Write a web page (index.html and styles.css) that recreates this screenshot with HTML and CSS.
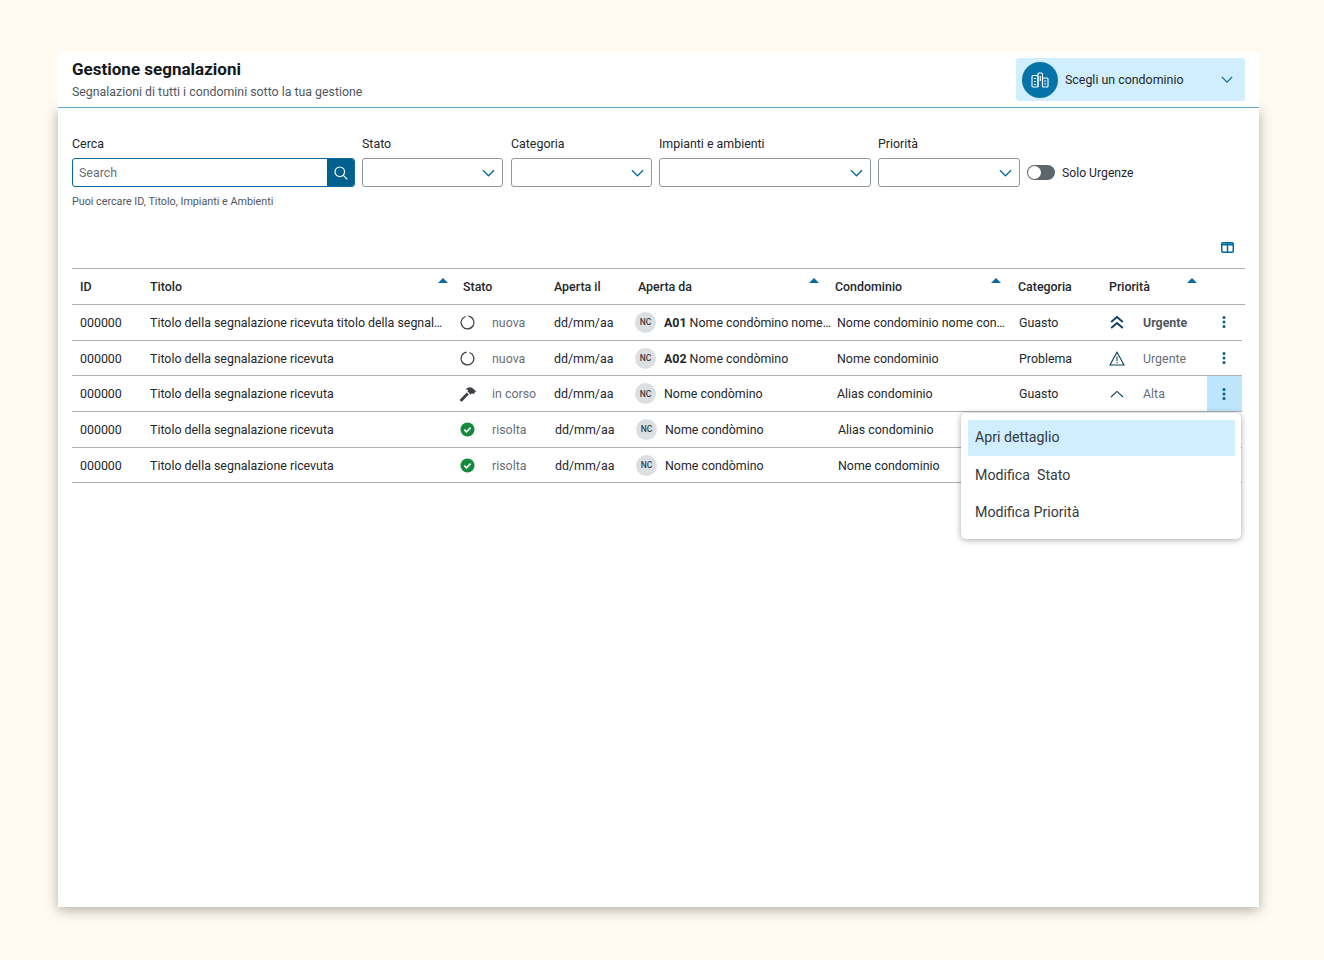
FILE: index.html
```html
<!DOCTYPE html>
<html lang="en">
<head>
  <meta charset="UTF-8">
  <title>Gestione segnalazioni</title>
  <link rel="stylesheet" href="styles.css">
</head>
<body>
  <svg class="sprite" width="0" height="0">
    <symbol id="chevron" viewBox="0 0 14 8"><path d="M1 1l6 6 6-6" fill="none" stroke="currentColor" stroke-width="1.4"/></symbol>
    <symbol id="ring" viewBox="0 0 16 16"><path d="M9 1.270A6.800 6.800 0 1 1 5.800 1.570" fill="none" stroke="currentColor" stroke-width="1.300"/></symbol>
    <symbol id="hammer" viewBox="0 0 18 16"><path d="M1.200 13.300l6.600-6.800 2 2-6.500 6.800a1 1 0 0 1-1.400 0l-.7-.6a1 1 0 0 1 0-1.400z M6.600 3.400c2-2.200 4.400-2.600 6.400-1.600l4 3.400-2.800 3-1.200-.9-1.300 1.300-3.400-3.400 1-1.200c-.8-.5-1.600-.6-2.700-.6z" fill="currentColor"/></symbol>
    <symbol id="check" viewBox="0 0 16 16"><circle cx="8" cy="8" r="7.500" fill="#168a3c"/><path d="M4.600 8.200l2.300 2.300 4.400-4.500" fill="none" stroke="#fff" stroke-width="1.700"/></symbol>
    <symbol id="double-up" viewBox="0 0 14 14"><path d="M1.200 7l5.800-5 5.800 5M1.200 13l5.800-5 5.800 5" fill="none" stroke="currentColor" stroke-width="1.800"/></symbol>
    <symbol id="warning" viewBox="0 0 16 15"><path d="M8 1.200l7 12.800H1z" fill="none" stroke="currentColor" stroke-width="1.100"/><path d="M8 5.500v4.600M8 11v1.300" stroke="currentColor" stroke-width="1.100"/></symbol>
    <symbol id="up" viewBox="0 0 14 8"><path d="M1 7l6-5.600L13 7" fill="none" stroke="currentColor" stroke-width="1.100"/></symbol>
    <symbol id="kebab" viewBox="0 0 4 12"><circle cx="2" cy="1.600" r="1.500"/><circle cx="2" cy="6" r="1.500"/><circle cx="2" cy="10.400" r="1.500"/></symbol>
  </svg>

  <div class="app">
    <header class="top">
      <div>
        <h1>Gestione segnalazioni</h1>
        <p>Segnalazioni di tutti i condomini sotto la tua gestione</p>
      </div>
      <div class="picker">
        <span class="picker-icon">
          <svg width="18" height="16" viewBox="0 0 18 16" fill="none" stroke="#fff" stroke-width="1.100">
            <rect x="1" y="3.500" width="6" height="11.500" rx="1"/>
            <path d="M7 15V2a1 1 0 0 1 1-1h2.500a1 1 0 0 1 1 1v13"/>
            <rect x="11.500" y="6" width="5.500" height="9" rx="1"/>
            <path d="M3 6.500h2M3 9.500h2M3 12.500h2M9.300 4v5M13.300 9h2M13.300 12h2"/>
          </svg>
        </span>
        <span class="picker-text">Scegli un condominio</span>
        <svg class="chev" width="12" height="7"><use href="#chevron"/></svg>
      </div>
    </header>

    <main class="panel">
      <div class="filters">
        <div class="field f-search">
          <label>Cerca</label>
          <div class="search">
            <span>Search</span>
            <button>
              <svg width="14" height="14" viewBox="0 0 14 14" fill="none" stroke="#fff" stroke-width="1.200"><circle cx="5.800" cy="5.800" r="4.800"/><path d="M9.300 9.300l4 4"/></svg>
            </button>
          </div>
          <small>Puoi cercare ID, Titolo, Impianti e Ambienti</small>
        </div>
        <div class="field f-stato">
          <label>Stato</label>
          <div class="select"><svg class="chev" width="13" height="8"><use href="#chevron"/></svg></div>
        </div>
        <div class="field f-cat">
          <label>Categoria</label>
          <div class="select"><svg class="chev" width="13" height="8"><use href="#chevron"/></svg></div>
        </div>
        <div class="field f-impianti">
          <label>Impianti e ambienti</label>
          <div class="select"><svg class="chev" width="13" height="8"><use href="#chevron"/></svg></div>
        </div>
        <div class="field f-prio">
          <label>Priorità</label>
          <div class="select"><svg class="chev" width="13" height="8"><use href="#chevron"/></svg></div>
        </div>
        <div class="urgent">
          <span class="toggle"><i></i></span>
          Solo Urgenze
        </div>
      </div>

      <div class="tools">
        <svg width="13" height="11" viewBox="0 0 13 11" fill="none" stroke="#006b9f" stroke-width="1.500"><rect x=".75" y=".75" width="11.500" height="9.500" rx="1"/><path d="M6.500 1v9"/><path d="M.75 2.500h11.500" stroke-width="2"/></svg>
      </div>

      <div class="table">
        <div class="row head">
          <div class="c-id">ID</div>
          <div class="c-title">Titolo<i class="sort"></i></div>
          <div class="c-state">Stato</div>
          <div class="c-date">Aperta il</div>
          <div class="c-by">Aperta da<i class="sort"></i></div>
          <div class="c-cond">Condominio<i class="sort"></i></div>
          <div class="c-cat">Categoria</div>
          <div class="c-prio">Priorità<i class="sort"></i></div>
          <div></div>
        </div>

        <div class="row">
          <div class="c-id">000000</div>
          <div class="c-title">Titolo della segnalazione ricevuta titolo della segnal…</div>
          <div class="c-state"><svg class="ic" width="15" height="15"><use href="#ring"/></svg><span class="muted">nuova</span></div>
          <div class="c-date">dd/mm/aa</div>
          <div class="c-by"><span class="nc">NC</span><span><b>A01</b> Nome condòmino nome…</span></div>
          <div class="c-cond">Nome condominio nome con…</div>
          <div class="c-cat">Guasto</div>
          <div class="c-prio"><svg class="pi navy" width="14" height="14"><use href="#double-up"/></svg><b class="muted-b">Urgente</b></div>
          <div class="c-act"><svg width="4" height="12"><use href="#kebab"/></svg></div>
        </div>

        <div class="row">
          <div class="c-id">000000</div>
          <div class="c-title">Titolo della segnalazione ricevuta</div>
          <div class="c-state"><svg class="ic flip" width="15" height="15"><use href="#ring"/></svg><span class="muted">nuova</span></div>
          <div class="c-date">dd/mm/aa</div>
          <div class="c-by"><span class="nc">NC</span><span><b>A02</b> Nome condòmino</span></div>
          <div class="c-cond">Nome condominio</div>
          <div class="c-cat">Problema</div>
          <div class="c-prio"><svg class="pi navy" width="16" height="15"><use href="#warning"/></svg><span class="muted">Urgente</span></div>
          <div class="c-act"><svg width="4" height="12"><use href="#kebab"/></svg></div>
        </div>

        <div class="row">
          <div class="c-id">000000</div>
          <div class="c-title">Titolo della segnalazione ricevuta</div>
          <div class="c-state"><svg class="ic" width="18" height="16"><use href="#hammer"/></svg><span class="muted">in corso</span></div>
          <div class="c-date">dd/mm/aa</div>
          <div class="c-by"><span class="nc">NC</span><span>Nome condòmino</span></div>
          <div class="c-cond">Alias condominio</div>
          <div class="c-cat">Guasto</div>
          <div class="c-prio"><svg class="pi navy" width="14" height="8"><use href="#up"/></svg><span class="muted">Alta</span></div>
          <div class="c-act active"><svg width="4" height="12"><use href="#kebab"/></svg></div>
        </div>

        <div class="row nudge">
          <div class="c-id">000000</div>
          <div class="c-title">Titolo della segnalazione ricevuta</div>
          <div class="c-state"><svg class="ic" width="15" height="15"><use href="#check"/></svg><span class="muted">risolta</span></div>
          <div class="c-date">dd/mm/aa</div>
          <div class="c-by"><span class="nc">NC</span><span>Nome condòmino</span></div>
          <div class="c-cond">Alias condominio</div>
          <div></div><div></div><div></div>
        </div>

        <div class="row nudge">
          <div class="c-id">000000</div>
          <div class="c-title">Titolo della segnalazione ricevuta</div>
          <div class="c-state"><svg class="ic" width="15" height="15"><use href="#check"/></svg><span class="muted">risolta</span></div>
          <div class="c-date">dd/mm/aa</div>
          <div class="c-by"><span class="nc">NC</span><span>Nome condòmino</span></div>
          <div class="c-cond">Nome condominio</div>
          <div></div><div></div><div></div>
        </div>

        <ul class="menu">
          <li class="on">Apri dettaglio</li>
          <li>Modifica&nbsp; Stato</li>
          <li>Modifica Priorità</li>
        </ul>
      </div>
    </main>
  </div>
</body>
</html>
```

FILE: styles.css
```css
* { box-sizing: border-box; }

body {
  margin: 0;
  height: 960px;
  padding: 52px 65px 0 58px;
  background: #fffbf3;
  font-family: Roboto, "Liberation Sans", sans-serif;
  font-size: 12.400px;
  color: #23282d;
  overflow: hidden;
}

.sprite { position: absolute; }

.app { width: 1201px; }

/* header */
.top {
  position: relative;
  z-index: 1;
  display: flex;
  justify-content: space-between;
  height: 56px;
  padding: 6px 14px 0;
  background: #fff;
  border-bottom: 1px solid #66a6c8;
}

.top h1 {
  margin: 1px 0 5px;
  font-size: 17px;
  line-height: 20px;
  font-weight: 700;
  color: #14181c;
}

.top p {
  margin: 0;
  font-size: 12.350px;
  line-height: 16px;
  color: #50585f;
}

.picker {
  display: flex;
  align-items: center;
  width: 229px;
  height: 43px;
  padding: 0 12px 0 6px;
  background: #d0eefe;
  border-radius: 3px;
}

.picker-icon {
  display: flex;
  align-items: center;
  justify-content: center;
  width: 36px;
  height: 36px;
  margin-right: 7px;
  border-radius: 50%;
  background: #0673a8;
}

.picker-text { flex: 1; font-size: 12.400px; color: #23282d; }

.chev { color: #0a6a9c; }

/* panel */
.panel {
  height: 799px;
  padding: 28px 14px 0;
  background: #fff;
  box-shadow: 0 3px 12px rgba(60, 55, 45, 0.4);
}

.filters {
  display: flex;
  gap: 7px;
  height: 94px;
}

.field label {
  display: block;
  height: 22px;
  font-size: 12.400px;
  line-height: 15px;
}

.f-search { width: 283px; }
.f-stato { width: 141px; }
.f-cat { width: 141px; margin-left: 1px; }
.f-impianti { width: 212px; }
.f-prio { width: 142px; }

.search {
  display: flex;
  justify-content: space-between;
  height: 29px;
  border: 1px solid #0a6a9c;
  border-radius: 3px;
  overflow: hidden;
}

.search span {
  padding-left: 6px;
  line-height: 27px;
  font-size: 12.400px;
  color: #687078;
}

.search button {
  display: flex;
  align-items: center;
  justify-content: center;
  width: 27px;
  padding: 0;
  border: 0;
  background: #02608f;
}

.field small {
  display: block;
  margin-top: 8px;
  font-size: 10.750px;
  line-height: 14px;
  color: #50585f;
}

.select {
  display: flex;
  align-items: center;
  justify-content: flex-end;
  height: 29px;
  padding-right: 7px;
  border: 1px solid #8f979e;
  border-radius: 3px;
}

.urgent {
  display: flex;
  align-items: center;
  gap: 7px;
  height: 29px;
  margin-top: 22px;
  font-size: 12.200px;
}

.toggle {
  display: block;
  width: 28px;
  height: 15px;
  padding: 1px;
  border-radius: 8px;
  background: #5c666f;
}

.toggle i {
  display: block;
  width: 13px;
  height: 13px;
  border-radius: 50%;
  background: #fff;
}

.tools {
  display: flex;
  justify-content: flex-end;
  height: 38px;
  padding: 12px 11px 0 0;
}

/* table */
.table { position: relative; border-top: 1px solid #a9b2b5; }

.row {
  display: grid;
  grid-template-columns: 78px 300px 96px 84px 200px 180px 91px 106px 35px;
  align-items: center;
  height: 35.700px;
  margin-right: 3px;
  border-bottom: 1px solid #a9b2b5;
  white-space: nowrap;
}

.row.head {
  height: 36px;
  margin-right: 0;
  font-weight: 500;
}

.row.head > div { position: relative; }

.c-id { padding-left: 8px; }

.head .c-state { padding-left: 13px; }

.c-state { display: flex; align-items: center; padding-left: 10px; }

.ic { width: 15px; margin-right: 17px; color: #3a4046; flex: none; }
.ic[width="18"] { width: 18px; margin-left: -1px; margin-right: 15px; }
.flip { transform: scaleX(-1); }

.muted { color: #687078; }
.muted-b { color: #50585f; font-weight: 700; }

.c-date { padding-left: 8px; }

.c-by { display: flex; align-items: center; padding-left: 5px; }
.head .c-by { padding-left: 8px; }

.nc {
  display: flex;
  align-items: center;
  justify-content: center;
  flex: none;
  width: 21px;
  height: 21px;
  margin-right: 8px;
  border-radius: 50%;
  background: #dcdfe2;
  font-size: 8.500px;
  font-weight: 500;
  color: #3a4046;
}

.nudge .c-date,
.nudge .c-by,
.nudge .c-cond { transform: translateX(1px); }

.c-cond { padding-left: 7px; }
.head .c-cond { padding-left: 5px; }

.c-cat { padding-left: 9px; }
.head .c-cat { padding-left: 8px; }

.c-prio { display: flex; align-items: center; padding-left: 8px; }

.pi { width: 16px; margin-right: 18px; flex: none; }
.navy { color: #0c3f5f; }

.c-act {
  display: flex;
  align-items: center;
  justify-content: center;
  height: 100%;
  fill: #0a5c8a;
}

.c-act svg { margin-right: 1px; }

.c-act.active { background: #bde6fc; }

.sort {
  position: absolute;
  top: -1px;
  width: 0;
  height: 0;
  border: 5px solid transparent;
  border-top: 0;
  border-bottom: 5px solid #0a6a9c;
}

.c-title .sort { left: 288px; }
.c-by .sort { left: 179px; }
.c-cond .sort { left: 161px; }
.c-prio .sort { left: 86px; }

.menu {
  position: absolute;
  left: 889px;
  top: 144px;
  width: 280px;
  height: 126px;
  margin: 0;
  padding: 7px 6px 0 7px;
  list-style: none;
  background: #fff;
  border-radius: 5px;
  box-shadow: 0 1px 6px rgba(0, 0, 0, 0.35);
  font-size: 14.200px;
  color: #343a40;
}

.menu li {
  height: 37.500px;
  padding-left: 7px;
  line-height: 35px;
}

.menu li.on { height: 36px; margin-bottom: 1.500px; background: #d0eefe; }
```
